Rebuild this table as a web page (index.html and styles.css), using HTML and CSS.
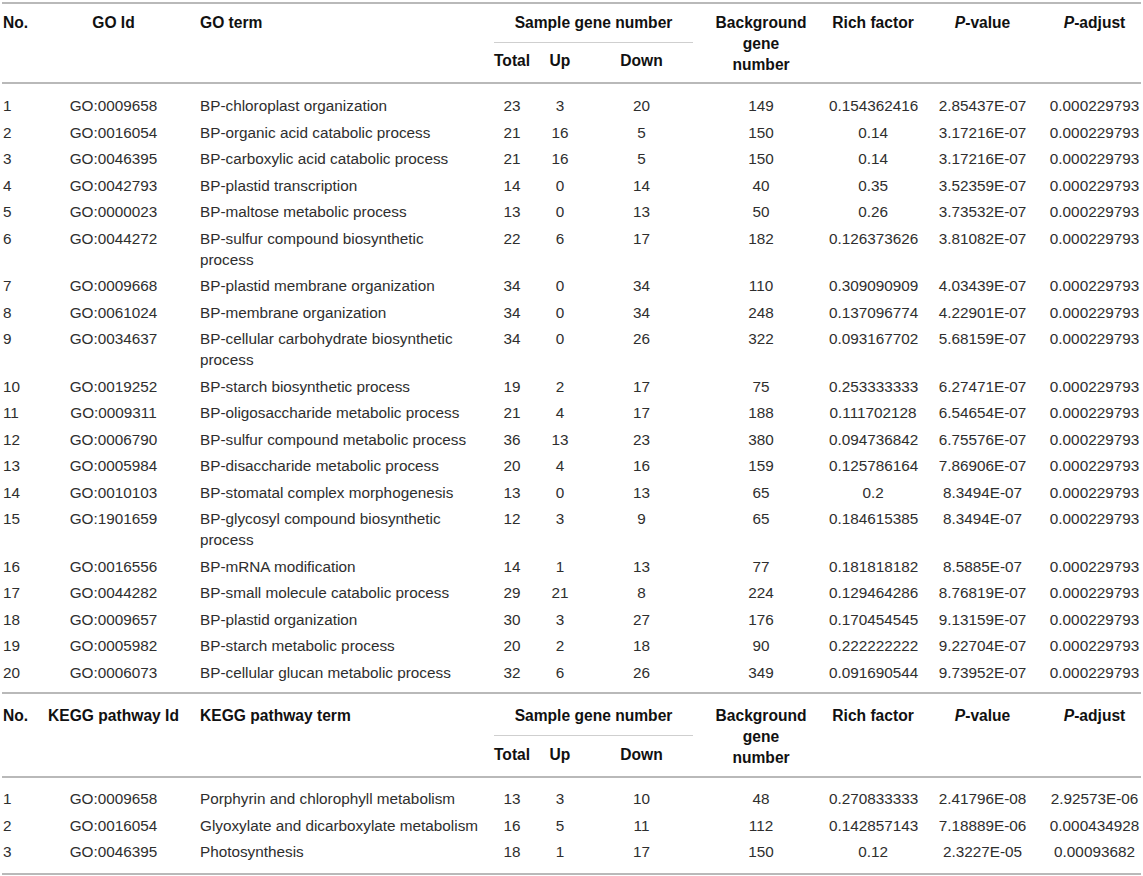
FILE: index.html
```html
<!DOCTYPE html>
<html>
<head>
<meta charset="utf-8">
<link rel="stylesheet" href="styles.css">
</head>
<body>
<div class="page">
<table class="tbl tbl-go">
  <colgroup>
    <col class="c-no"><col class="c-id"><col class="c-term"><col class="c-total"><col class="c-up"><col class="c-down"><col class="c-bg"><col class="c-rich"><col class="c-pv"><col class="c-pa">
  </colgroup>
  <thead>
    <tr class="h1">
      <th rowspan="2" class="l">No.</th>
      <th rowspan="2">GO Id</th>
      <th rowspan="2" class="term">GO term</th>
      <th colspan="3" class="group">Sample gene number</th>
      <th rowspan="2">Background<br>gene<br>number</th>
      <th rowspan="2">Rich factor</th>
      <th rowspan="2"><i>P</i>-value</th>
      <th rowspan="2"><i>P</i>-adjust</th>
    </tr>
    <tr class="h2">
      <th>Total</th><th>Up</th><th>Down</th>
    </tr>
  </thead>
  <tbody>
    <tr><td class="l">1</td><td>GO:0009658</td><td class="term">BP-chloroplast organization</td><td>23</td><td>3</td><td>20</td><td>149</td><td>0.154362416</td><td>2.85437E-07</td><td>0.000229793</td></tr>
    <tr><td class="l">2</td><td>GO:0016054</td><td class="term">BP-organic acid catabolic process</td><td>21</td><td>16</td><td>5</td><td>150</td><td>0.14</td><td>3.17216E-07</td><td>0.000229793</td></tr>
    <tr><td class="l">3</td><td>GO:0046395</td><td class="term">BP-carboxylic acid catabolic process</td><td>21</td><td>16</td><td>5</td><td>150</td><td>0.14</td><td>3.17216E-07</td><td>0.000229793</td></tr>
    <tr><td class="l">4</td><td>GO:0042793</td><td class="term">BP-plastid transcription</td><td>14</td><td>0</td><td>14</td><td>40</td><td>0.35</td><td>3.52359E-07</td><td>0.000229793</td></tr>
    <tr><td class="l">5</td><td>GO:0000023</td><td class="term">BP-maltose metabolic process</td><td>13</td><td>0</td><td>13</td><td>50</td><td>0.26</td><td>3.73532E-07</td><td>0.000229793</td></tr>
    <tr><td class="l">6</td><td>GO:0044272</td><td class="term">BP-sulfur compound biosynthetic<br>process</td><td>22</td><td>6</td><td>17</td><td>182</td><td>0.126373626</td><td>3.81082E-07</td><td>0.000229793</td></tr>
    <tr><td class="l">7</td><td>GO:0009668</td><td class="term">BP-plastid membrane organization</td><td>34</td><td>0</td><td>34</td><td>110</td><td>0.309090909</td><td>4.03439E-07</td><td>0.000229793</td></tr>
    <tr><td class="l">8</td><td>GO:0061024</td><td class="term">BP-membrane organization</td><td>34</td><td>0</td><td>34</td><td>248</td><td>0.137096774</td><td>4.22901E-07</td><td>0.000229793</td></tr>
    <tr><td class="l">9</td><td>GO:0034637</td><td class="term">BP-cellular carbohydrate biosynthetic<br>process</td><td>34</td><td>0</td><td>26</td><td>322</td><td>0.093167702</td><td>5.68159E-07</td><td>0.000229793</td></tr>
    <tr><td class="l">10</td><td>GO:0019252</td><td class="term">BP-starch biosynthetic process</td><td>19</td><td>2</td><td>17</td><td>75</td><td>0.253333333</td><td>6.27471E-07</td><td>0.000229793</td></tr>
    <tr><td class="l">11</td><td>GO:0009311</td><td class="term">BP-oligosaccharide metabolic process</td><td>21</td><td>4</td><td>17</td><td>188</td><td>0.111702128</td><td>6.54654E-07</td><td>0.000229793</td></tr>
    <tr><td class="l">12</td><td>GO:0006790</td><td class="term">BP-sulfur compound metabolic process</td><td>36</td><td>13</td><td>23</td><td>380</td><td>0.094736842</td><td>6.75576E-07</td><td>0.000229793</td></tr>
    <tr><td class="l">13</td><td>GO:0005984</td><td class="term">BP-disaccharide metabolic process</td><td>20</td><td>4</td><td>16</td><td>159</td><td>0.125786164</td><td>7.86906E-07</td><td>0.000229793</td></tr>
    <tr><td class="l">14</td><td>GO:0010103</td><td class="term">BP-stomatal complex morphogenesis</td><td>13</td><td>0</td><td>13</td><td>65</td><td>0.2</td><td>8.3494E-07</td><td>0.000229793</td></tr>
    <tr><td class="l">15</td><td>GO:1901659</td><td class="term">BP-glycosyl compound biosynthetic<br>process</td><td>12</td><td>3</td><td>9</td><td>65</td><td>0.184615385</td><td>8.3494E-07</td><td>0.000229793</td></tr>
    <tr><td class="l">16</td><td>GO:0016556</td><td class="term">BP-mRNA modification</td><td>14</td><td>1</td><td>13</td><td>77</td><td>0.181818182</td><td>8.5885E-07</td><td>0.000229793</td></tr>
    <tr><td class="l">17</td><td>GO:0044282</td><td class="term">BP-small molecule catabolic process</td><td>29</td><td>21</td><td>8</td><td>224</td><td>0.129464286</td><td>8.76819E-07</td><td>0.000229793</td></tr>
    <tr><td class="l">18</td><td>GO:0009657</td><td class="term">BP-plastid organization</td><td>30</td><td>3</td><td>27</td><td>176</td><td>0.170454545</td><td>9.13159E-07</td><td>0.000229793</td></tr>
    <tr><td class="l">19</td><td>GO:0005982</td><td class="term">BP-starch metabolic process</td><td>20</td><td>2</td><td>18</td><td>90</td><td>0.222222222</td><td>9.22704E-07</td><td>0.000229793</td></tr>
    <tr><td class="l">20</td><td>GO:0006073</td><td class="term">BP-cellular glucan metabolic process</td><td>32</td><td>6</td><td>26</td><td>349</td><td>0.091690544</td><td>9.73952E-07</td><td>0.000229793</td></tr>
  </tbody>
</table>
<table class="tbl tbl-kegg">
  <colgroup>
    <col class="c-no"><col class="c-id"><col class="c-term"><col class="c-total"><col class="c-up"><col class="c-down"><col class="c-bg"><col class="c-rich"><col class="c-pv"><col class="c-pa">
  </colgroup>
  <thead>
    <tr class="h1">
      <th rowspan="2" class="l">No.</th>
      <th rowspan="2">KEGG pathway Id</th>
      <th rowspan="2" class="term">KEGG pathway term</th>
      <th colspan="3" class="group">Sample gene number</th>
      <th rowspan="2">Background<br>gene<br>number</th>
      <th rowspan="2">Rich factor</th>
      <th rowspan="2"><i>P</i>-value</th>
      <th rowspan="2"><i>P</i>-adjust</th>
    </tr>
    <tr class="h2">
      <th>Total</th><th>Up</th><th>Down</th>
    </tr>
  </thead>
  <tbody>
    <tr><td class="l">1</td><td>GO:0009658</td><td class="term">Porphyrin and chlorophyll metabolism</td><td>13</td><td>3</td><td>10</td><td>48</td><td>0.270833333</td><td>2.41796E-08</td><td>2.92573E-06</td></tr>
    <tr><td class="l">2</td><td>GO:0016054</td><td class="term">Glyoxylate and dicarboxylate metabolism</td><td>16</td><td>5</td><td>11</td><td>112</td><td>0.142857143</td><td>7.18889E-06</td><td>0.000434928</td></tr>
    <tr><td class="l">3</td><td>GO:0046395</td><td class="term">Photosynthesis</td><td>18</td><td>1</td><td>17</td><td>150</td><td>0.12</td><td>2.3227E-05</td><td>0.00093682</td></tr>
  </tbody>
</table>
</div>
</body>
</html>
```

FILE: styles.css
```css
html, body {
  margin: 0;
  padding: 0;
  background: #ffffff;
}

.page {
  padding: 0 2px;
  font-family: "Liberation Sans", Arial, sans-serif;
  font-size: 15.3px;
  color: #2e2e2e;
}

.tbl {
  width: 1139px;
  table-layout: fixed;
  border-collapse: separate;
  border-spacing: 0;
  border-top: 2px solid #b9b9b9;
}

.tbl-go {
  margin-top: 2px;
}

.tbl-kegg {
  border-bottom: 2px solid #b9b9b9;
}

.c-no { width: 46px; }
.c-id { width: 131px; }
.c-term { width: 315px; }
.c-total { width: 36px; }
.c-up { width: 60px; }
.c-down { width: 103px; }
.c-bg { width: 136px; }
.c-rich { width: 88px; }
.c-pv { width: 131px; }
.c-pa { width: 93px; }

th, td {
  padding: 0;
  text-align: center;
  vertical-align: top;
  line-height: 21px;
  white-space: nowrap;
}

th {
  font-weight: bold;
  font-size: 15.6px;
  color: #111111;
}

th i {
  font-style: italic;
}

th.l, td.l {
  text-align: left;
  padding-left: 1px;
}

th.term, td.term {
  text-align: left;
  padding-left: 21px;
}

/* header rows */
.h1 th {
  padding-top: 8px;
  padding-bottom: 0;
  border-bottom: 2px solid #b9b9b9;
}

.h1 th.group {
  padding-bottom: 9px;
  border-bottom: 1px solid #cfcfcf;
}

.h2 th {
  padding-top: 7px;
  padding-bottom: 11px;
  border-bottom: 2px solid #b9b9b9;
}

.tbl-kegg .h1 th {
  padding-top: 11px;
}

.tbl-kegg .h2 th {
  padding-top: 8.5px;
  padding-bottom: 10.5px;
}

/* body rows */
td {
  padding-top: 2.75px;
  padding-bottom: 2.75px;
}

tbody tr:first-child td {
  padding-top: 11px;
}

.tbl-go tbody tr:last-child td {
  padding-bottom: 9px;
}

.tbl-kegg tbody tr:first-child td {
  padding-top: 10.5px;
}

.tbl-kegg tbody tr:last-child td {
  padding-bottom: 10.5px;
}
```
